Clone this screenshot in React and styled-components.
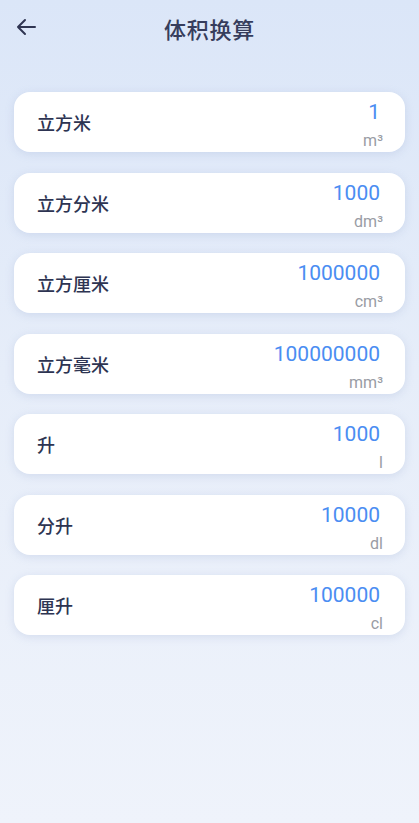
import React from "react";
import styled, { createGlobalStyle } from "styled-components";

const Global = createGlobalStyle`
  html, body { margin: 0; padding: 0; }
  body {
    font-family: "Noto Sans", "Noto Sans CJK SC", sans-serif;
  }
  * { box-sizing: border-box; }
`;

const Page = styled.div`
  width: 419px;
  height: 823px;
  background: linear-gradient(180deg, #dbe6f8 0%, #e6edf9 45%, #eff3fb 100%);
  display: flex;
  flex-direction: column;
  overflow: hidden;
`;

const Header = styled.div`
  height: 55px;
  display: flex;
  align-items: center;
  position: relative;
  justify-content: center;
`;

const Back = styled.button`
  position: absolute;
  left: 14px;
  top: 15px;
  width: 24px;
  height: 24px;
  padding: 0;
  border: none;
  background: none;
  display: flex;
  align-items: center;
  justify-content: center;
`;

const Title = styled.h1`
  margin: 0;
  font-family: "Noto Sans CJK SC", sans-serif;
  font-size: 22px;
  font-weight: 500;
  color: #363d5c;
  letter-spacing: 0.8px;
`;

const List = styled.div`
  display: flex;
  flex-direction: column;
  gap: 20.5px;
  padding: 37px 14px 0 14px;
`;

const Card = styled.div`
  height: 60px;
  background: #fff;
  border-radius: 16px;
  box-shadow: 0 2px 8px rgba(150, 170, 210, 0.28);
  display: flex;
  align-items: center;
  justify-content: space-between;
  padding: 0 22px 0 23px;
`;

const Label = styled.div`
  font-family: "Noto Sans CJK SC", sans-serif;
  font-size: 18px;
  font-weight: 500;
  color: #2d3452;
`;

const Right = styled.div`
  align-self: stretch;
  display: flex;
  flex-direction: column;
  align-items: flex-end;
  justify-content: space-between;
  padding: 6px 0 1px 0;
`;

const Value = styled.div`
  font-family: Roboto, "Noto Sans", sans-serif;
  font-size: 21px;
  line-height: 28px;
  color: #4a8df2;
  margin-right: 3px;
`;

const Unit = styled.div`
  font-family: Roboto, "Noto Sans", sans-serif;
  font-size: 16px;
  line-height: 20px;
  color: #999ca4;
`;

const rows = [
  ["立方米", "1", "m³"],
  ["立方分米", "1000", "dm³"],
  ["立方厘米", "1000000", "cm³"],
  ["立方毫米", "100000000", "mm³"],
  ["升", "1000", "l"],
  ["分升", "10000", "dl"],
  ["厘升", "100000", "cl"],
];

export default function App() {
  return (
    <>
      <Global />
      <Page>
        <Header>
          <Back aria-label="back">
            <svg width="22" height="18" viewBox="0 0 22 18" fill="none">
              <path d="M20 9H3M10 2L3 9l7 7" stroke="#2f3552" strokeWidth="2" strokeLinecap="round" strokeLinejoin="round" />
            </svg>
          </Back>
          <Title>体积换算</Title>
        </Header>
        <List>
          {rows.map(([l, v, u]) => (
            <Card key={l}>
              <Label>{l}</Label>
              <Right>
                <Value>{v}</Value>
                <Unit>{u}</Unit>
              </Right>
            </Card>
          ))}
        </List>
      </Page>
    </>
  );
}
